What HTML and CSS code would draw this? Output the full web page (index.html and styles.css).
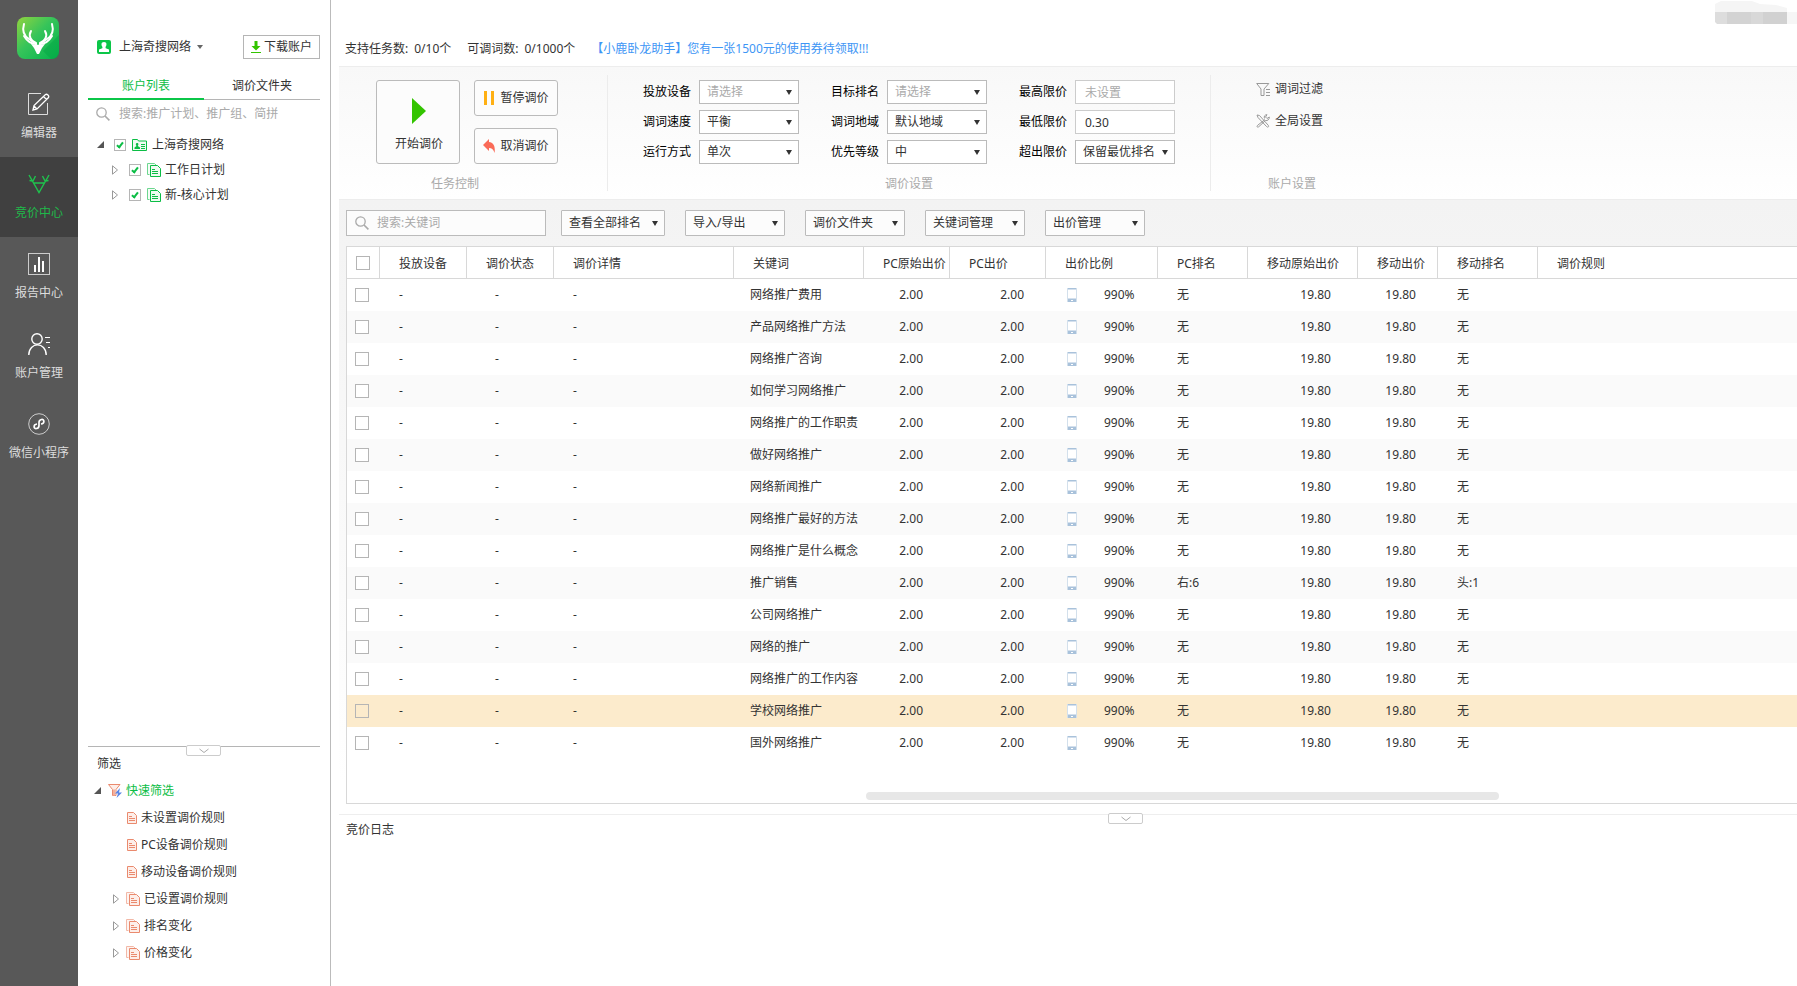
FILE: index.html
```html
<!DOCTYPE html>
<html lang="zh-CN">
<head>
    <meta charset="UTF-8">
    <meta name="viewport" content="width=device-width, initial-scale=1.0">
    <title>竞价中心</title>
    <link rel="stylesheet" href="styles.css">
</head>
<body>

<!-- shared icons -->
<svg class="defs" width="0" height="0">
    <symbol id="i-search" viewBox="0 0 14 14">
        <circle cx="5.5" cy="5.5" r="4.7" fill="none" stroke="#aaa" stroke-width="1.3"/>
        <path d="M9 9l4.4 4.4" stroke="#aaa" stroke-width="1.6"/>
    </symbol>
    <symbol id="i-closed" viewBox="0 0 7 10">
        <path d="M.5 .8v8.400l5-4.200z" fill="#fff" stroke="#999"/>
    </symbol>
    <symbol id="i-open" viewBox="0 0 7 7">
        <path d="M7 0v7H0z" fill="#555"/>
    </symbol>
    <symbol id="i-doc" viewBox="0 0 10 12">
        <path d="M.5 .5h6l3 3v8h-9z" fill="#fdeee9" stroke="#ea8a6e"/>
        <path d="M2 4.500h3M2 6.500h6M2 8.500h6" stroke="#ea8a6e"/>
    </symbol>
    <symbol id="i-docs" viewBox="0 0 14 14">
        <path d="M2.500 11.500h-2v-11h7l2 2" stroke="currentColor" opacity=".6"/>
        <path d="M3.500 2.500h7l3 3v8h-10z" stroke="currentColor"/>
        <path d="M5 6.500h3M5 8.500h6M5 10.500h6" stroke="currentColor"/>
    </symbol>
    <symbol id="i-phone" viewBox="0 0 10 14">
        <rect x=".5" y=".5" width="9" height="13" fill="#fff" stroke="#d3e0ec"/>
        <path d="M1 0h8v1.500H1zM1 10.500h8V14H1z" fill="#a9c2db"/>
        <path d="M4 12h2v1H4z" fill="#fff"/>
    </symbol>
    <symbol id="i-fold" viewBox="0 0 12 6">
        <path d="M1.500 1l4.500 3.500L10.500 1" fill="none" stroke="#aaa"/>
    </symbol>
</svg>

<nav class="nav">
    <svg class="logo" width="42" height="42" viewBox="0 0 42 42">
        <defs>
            <linearGradient id="lg" x1="0" y1="0" x2="1" y2="1">
                <stop offset="0" stop-color="#92d43f"/>
                <stop offset=".45" stop-color="#36c45a"/>
                <stop offset="1" stop-color="#02b44c"/>
            </linearGradient>
        </defs>
        <rect width="42" height="42" rx="8" fill="url(#lg)"/>
        <path d="M42 18L26 34l8 8h2a6 6 0 0 0 6-6z" fill="#05a544" opacity=".5"/>
        <g fill="none" stroke="#fff" stroke-width="2" stroke-linecap="round">
            <path d="M7 7c-2 7 0 12 5 15 3 2 5 4 7 5"/>
            <path d="M35 7c2 7 0 12-5 15-3 2-5 4-7 5"/>
            <path d="M14 14c-3 5 0 10 5 12"/>
            <path d="M28 14c3 5 0 10-5 12"/>
            <path d="M7 19c3 5 6 8 12 8M35 19c-3 5-6 8-12 8"/>
        </g>
        <path d="M14 27c5 1 9 1 14 0l-3 4-3 6h-2l-3-6z" fill="#fff"/>
    </svg>
    <a href="#" class="nav_item">
        <svg width="22" height="22" viewBox="0 0 22 22" fill="none" stroke="#ddd">
            <path d="M13 .5H.5v21h19V10"/>
            <path d="M5 17l1-4.500L17.500 1.500c1.500-1 4 1.500 3 3L9 16zM6 13l3 3M15.500 3.500l3 3" stroke="#fff" stroke-width="1.300"/>
        </svg>
        编辑器
    </a>
    <a href="#" class="nav_item active">
        <svg width="22" height="22" viewBox="0 0 22 22" fill="none" stroke="#1fc24d" stroke-width="1.400">
            <path d="M1 2l10 17.500L21 2M5.500 10h11M1.500 7.500l3 .5M7.500 3L5 8M20.500 7.500l-3 .5M14.500 3L17 8"/>
        </svg>
        竞价中心
    </a>
    <a href="#" class="nav_item">
        <svg width="22" height="22" viewBox="0 0 22 22">
            <rect x=".5" y=".5" width="21" height="21" fill="none" stroke="#ccc"/>
            <path d="M7 12v7M11 4v15M15 8v11" stroke="#fff" stroke-width="2"/>
        </svg>
        报告中心
    </a>
    <a href="#" class="nav_item">
        <svg width="22" height="22" viewBox="0 0 22 22" fill="none" stroke="#fff" stroke-width="1.400">
            <circle cx="9" cy="6" r="5.200"/>
            <path d="M.8 22c0-13.500 17.400-13.500 17.400 0"/>
            <path d="M17 4.500h5M18 9.500h4M20 14.500h2" stroke-width="1"/>
        </svg>
        账户管理
    </a>
    <a href="#" class="nav_item">
        <svg width="22" height="22" viewBox="0 0 22 22" fill="none">
            <circle cx="11" cy="11" r="10.300" stroke="#ccc"/>
            <path d="M9 11c-4 .5-3.500 5-.5 4.500 2-.3 2.500-1.500 2.500-3V9.500c0-1.500.5-2.700 2.500-3 3-.5 3.500 4-.5 4.500" stroke="#fff" stroke-width="1.700"/>
        </svg>
        微信小程序
    </a>
</nav>

<aside class="side">
    <div class="account">
        <svg width="14" height="14" viewBox="0 0 14 14">
            <rect width="14" height="14" rx="2" fill="#0bc648"/>
            <path d="M7 2c3 0 3 3 1.500 5l.2 1.200L12 9.500V12H2V9.500l3.300-1.300.2-1.200C4 5 4 2 7 2z" fill="#fff"/>
        </svg>
        <button class="account_name">上海奇搜网络</button>
        <button class="download">
            <svg width="10" height="12" viewBox="0 0 10 12" fill="#33c400"><path d="M3.500 0h3v5H9.500L5 9.500.5 5h3zM0 11h10v1H0z"/></svg>
            下载账户
        </button>
    </div>
    <div class="tabs">
        <button class="tab on">账户列表</button>
        <button class="tab">调价文件夹</button>
    </div>
    <div class="side_search">
        <svg width="14" height="14"><use href="#i-search"/></svg>
        <input type="text" aria-label="搜索账户" placeholder="搜索:推广计划、推广组、简拼">
    </div>
    <div class="tree">
        <div class="tree_row">
            <svg width="7" height="7"><use href="#i-open"/></svg>
            <input type="checkbox" id="t1" checked>
            <svg width="15" height="12" viewBox="0 0 15 12">
                <path d="M.5 11.500V.5h5l1 1.500h8v9.500z" fill="#effbf2" stroke="#0bbd45"/>
                <path d="M5 4c2 0 1.500 2 .8 3L8 8.500V10H2.500V8.500L4.500 7C3.500 6 3.500 4 5 4z" fill="#0bbd45"/>
                <path d="M9 5.500h4M9 7.500h4M9 9.500h4" stroke="#0bbd45"/>
            </svg>
            <label for="t1">上海奇搜网络</label>
        </div>
        <div class="tree_row child">
            <svg width="7" height="10"><use href="#i-closed"/></svg>
            <input type="checkbox" id="t2" checked>
            <svg class="docs green" width="14" height="14"><use href="#i-docs"/></svg>
            <label for="t2">工作日计划</label>
        </div>
        <div class="tree_row child">
            <svg width="7" height="10"><use href="#i-closed"/></svg>
            <input type="checkbox" id="t3" checked>
            <svg class="docs green" width="14" height="14"><use href="#i-docs"/></svg>
            <label for="t3">新-核心计划</label>
        </div>
    </div>
    <div class="filter">
        <button class="fold" aria-label="收起"><svg width="12" height="6"><use href="#i-fold"/></svg></button>
        <div class="filter_title">筛选</div>
        <div class="filter_row root">
            <svg width="7" height="7"><use href="#i-open"/></svg>
            <svg width="14" height="14" viewBox="0 0 14 14">
                <path d="M.5 .5h11.500L8 5.500v6H4.500v-6z" fill="#fdeee9" stroke="#ea8a6e"/>
                <path d="M5 5.500h2v6H5z" fill="#f4b09c"/>
                <path d="M12 4L7 9.500h3L8.500 14 14 8.500h-3z" fill="#5b86e5"/>
            </svg>
            <a href="#">快速筛选</a>
        </div>
        <div class="filter_row leaf"><svg width="10" height="12"><use href="#i-doc"/></svg><a href="#">未设置调价规则</a></div>
        <div class="filter_row leaf"><svg width="10" height="12"><use href="#i-doc"/></svg><a href="#">PC设备调价规则</a></div>
        <div class="filter_row leaf"><svg width="10" height="12"><use href="#i-doc"/></svg><a href="#">移动设备调价规则</a></div>
        <div class="filter_row branch"><svg width="7" height="10"><use href="#i-closed"/></svg><svg class="docs red" width="14" height="14"><use href="#i-docs"/></svg><a href="#">已设置调价规则</a></div>
        <div class="filter_row branch"><svg width="7" height="10"><use href="#i-closed"/></svg><svg class="docs red" width="14" height="14"><use href="#i-docs"/></svg><a href="#">排名变化</a></div>
        <div class="filter_row branch"><svg width="7" height="10"><use href="#i-closed"/></svg><svg class="docs red" width="14" height="14"><use href="#i-docs"/></svg><a href="#">价格变化</a></div>
    </div>
</aside>

<main class="main">
    <header class="top">
        <span class="count">支持任务数:</span><span>0/10个</span>
        <span class="count">可调词数:</span><span>0/1000个</span>
        <a href="#">【小鹿卧龙助手】您有一张1500元的使用券待领取!!!</a>
        <svg class="masked" width="85" height="24" viewBox="0 0 85 24">
            <path d="M3 12V4l6-3h31l8 3 16 1 11 3v4z" fill="#f5f5f5"/>
            <path d="M3 12h12v12H5l-2-2z" fill="#ddd"/>
            <path d="M15 12h36v12H15z" fill="#d3d3d3"/>
            <path d="M39 12h12v12H39z" fill="#d8d8d8"/>
            <path d="M51 12h24v12H51z" fill="#d1d1d1"/>
            <path d="M75 12h10v12H75z" fill="#f6f6f6"/>
        </svg>
    </header>

    <section class="ribbon">
        <div class="group task">
            <div class="task_btns">
                <button class="start">
                    <svg width="14" height="26" viewBox="0 0 14 26"><path d="M0 0l14 13L0 26z" fill="#33c400"/></svg>
                    开始调价
                </button>
                <div class="task_col">
                    <button>
                        <svg width="12" height="14" viewBox="0 0 12 14" fill="#ffb014"><path d="M1 0h3v14H1zM8 0h3v14H8z"/></svg>
                        暂停调价
                    </button>
                    <button>
                        <svg width="12" height="14" viewBox="0 0 12 14"><path d="M0 6l6-6v3c5 .5 6.500 5 5.500 11C10.500 10.500 9 9 6 9v3z" fill="#fa6b58"/></svg>
                        取消调价
                    </button>
                </div>
            </div>
            <div class="caption">任务控制</div>
        </div>
        <div class="group setting">
            <div class="fields">
                <div class="field"><label for="f1">投放设备</label><select id="f1" class="empty"><option>请选择</option></select></div>
                <div class="field"><label for="f2">目标排名</label><select id="f2" class="empty"><option>请选择</option></select></div>
                <div class="field"><label for="f3">最高限价</label><input id="f3" type="text" placeholder="未设置"></div>
                <div class="field"><label for="f4">调词速度</label><select id="f4"><option>平衡</option></select></div>
                <div class="field"><label for="f5">调词地域</label><select id="f5"><option>默认地域</option></select></div>
                <div class="field"><label for="f6">最低限价</label><input id="f6" type="text" value="0.30"></div>
                <div class="field"><label for="f7">运行方式</label><select id="f7"><option>单次</option></select></div>
                <div class="field"><label for="f8">优先等级</label><select id="f8"><option>中</option></select></div>
                <div class="field"><label for="f9">超出限价</label><select id="f9"><option>保留最优排名</option></select></div>
            </div>
            <div class="caption">调价设置</div>
        </div>
        <div class="group global">
            <div class="links">
                <a href="#">
                    <svg width="14" height="13" viewBox="0 0 14 13" fill="none" stroke="#999"><path d="M.7 .5h12.100L8 6v6.500H5V6zM10 6.500h4M10 9.500h4M10 12.500h4"/></svg>
                    调词过滤
                </a>
                <a href="#">
                    <svg width="14" height="14" viewBox="0 0 14 14" fill="none" stroke="#999">
                        <path d="M1 1l2.500.5 8.500 9.500c1.500 1.500 0 3-1.500 1.500L2 3.500z"/>
                        <path d="M9 5.500L2 11c-2 1.500-.5 3 1 1.500l6.500-6c2 .5 4-1 3.800-3.500L11 4.500 9.500 3 11 .7C9 .5 7.500 2.500 8.500 4.500"/>
                    </svg>
                    全局设置
                </a>
            </div>
            <div class="caption">账户设置</div>
        </div>
    </section>

    <section class="list">
        <div class="toolbar">
            <div class="kw_search">
                <svg width="14" height="14"><use href="#i-search"/></svg>
                <input type="text" aria-label="搜索关键词" placeholder="搜索:关键词">
            </div>
            <select class="rank" aria-label="排名"><option>查看全部排名</option></select>
            <button class="menu">导入/导出</button>
            <button class="menu">调价文件夹</button>
            <button class="menu">关键词管理</button>
            <button class="menu">出价管理</button>
        </div>
        <div class="grid">
            <table>
                <colgroup>
                    <col class="w33"><col class="w87"><col class="w87"><col class="w180"><col class="w130">
                    <col class="w86"><col class="w96"><col class="w112"><col class="w90"><col class="w110">
                    <col class="w80"><col class="w100"><col>
                </colgroup>
                <thead>
                    <tr>
                        <th class="check"><input type="checkbox" aria-label="全选"></th>
                        <th>投放设备</th>
                        <th>调价状态</th>
                        <th>调价详情</th>
                        <th>关键词</th>
                        <th>PC原始出价</th>
                        <th>PC出价</th>
                        <th>出价比例</th>
                        <th>PC排名</th>
                        <th>移动原始出价</th>
                        <th>移动出价</th>
                        <th>移动排名</th>
                        <th>调价规则</th>
                    </tr>
                </thead>
                <tbody id="rows"></tbody>
            </table>
            <div class="scroll"><div class="thumb"></div></div>
        </div>
    </section>

    <section class="log">
        <button class="fold" aria-label="收起日志"><svg width="12" height="6"><use href="#i-fold"/></svg></button>
        竞价日志
    </section>
</main>

<script>
    let words = ["网络推广费用","产品网络推广方法","网络推广咨询","如何学习网络推广","网络推广的工作职责","做好网络推广","网络新闻推广","网络推广最好的方法","网络推广是什么概念","推广销售","公司网络推广","网络的推广","网络推广的工作内容","学校网络推广","国外网络推广"]
    let html = ""
    for (let i = 0; i < words.length; i++) {
        let pc = "无"
        let mobile = "无"
        if (words[i] === "推广销售") {
            pc = "右:6"
            mobile = "头:1"
        }
        html += '<tr' + (words[i] === "学校网络推广" ? ' class="hover"' : '') + '>'
            + '<td class="check"><input type="checkbox" aria-label="' + words[i] + '"></td>'
            + '<td>-</td><td class="state">-</td><td>-</td>'
            + '<td class="word">' + words[i] + '</td>'
            + '<td class="num wide">2.00</td><td class="num">2.00</td>'
            + '<td class="ratio"><svg width="10" height="14"><use href="#i-phone"/></svg><span>990%</span></td>'
            + '<td>' + pc + '</td>'
            + '<td class="num wide">19.80</td><td class="num">19.80</td>'
            + '<td>' + mobile + '</td><td></td></tr>'
    }
    document.getElementById("rows").innerHTML = html
</script>

</body>
</html>
```
FILE: styles.css
```css
*{
    box-sizing: border-box;
}
body{
    margin: 0;
    min-height: 100vh;
    display: flex;
    background: #fff;
    color: #333;
    font: 12px/20px "Noto Sans", "Noto Sans CJK SC", sans-serif;
}
a{
    color: inherit;
    text-decoration: none;
}
button, input, select{
    margin: 0;
    font: inherit;
    color: inherit;
}
button{
    padding: 0;
    border: 0;
    background: none;
    cursor: pointer;
}
svg{
    flex: none;
    display: block;
}
.defs{
    position: absolute;
}
input::placeholder{
    color: #aaa;
    opacity: 1;
}

/* left nav */
.nav{
    flex: none;
    width: 78px;
    background: #585858;
}
.logo{
    margin: 17px 0 18px 17px;
}
.nav_item{
    display: flex;
    flex-direction: column;
    align-items: center;
    gap: 8px;
    height: 80px;
    padding-top: 16px;
    color: #ddd;
}
.nav_item.active{
    background: #404040;
    color: #1fb94a;
}

/* account panel */
.side{
    flex: none;
    width: 253px;
    display: flex;
    flex-direction: column;
    padding: 35px 10px 0;
    border-right: 1px solid #bbb;
}
.account{
    display: flex;
    align-items: center;
    padding-left: 9px;
}
.account_name{
    margin-left: 8px;
}
.account_name::after{
    content: "";
    display: inline-block;
    margin-left: 6px;
    vertical-align: 2px;
    border: 3px solid transparent;
    border-top: 4px solid #666;
    border-bottom: 0;
}
.download{
    display: flex;
    align-items: center;
    justify-content: center;
    gap: 3px;
    width: 77px;
    height: 24px;
    margin-left: auto;
    border: 1px solid #b5b5b5;
}
.tabs{
    display: flex;
    height: 24px;
    margin-top: 17px;
    border-bottom: 1px solid #b5b5b5;
}
.tab{
    flex: 1;
    height: 24px;
    padding-bottom: 4px;
}
.tab.on{
    padding-bottom: 2px;
    border-bottom: 2px solid #0bc648;
    color: #0bbd45;
}
.side_search{
    display: flex;
    align-items: center;
    gap: 9px;
    height: 28px;
    padding-left: 8px;
}
.side_search input, .kw_search input{
    flex: 1;
    min-width: 0;
    padding: 0;
    border: 0;
    outline: 0;
    background: none;
}
.tree{
    flex: 1;
    padding: 4px 0 0 9px;
}
.tree_row{
    display: flex;
    align-items: center;
    height: 25px;
}
.tree_row input{
    margin: 0 6px 0 10px;
}
.tree_row label{
    margin-left: 5px;
}
.tree_row.child{
    padding-left: 15px;
}
.tree_row.child label{
    margin-left: 4px;
}
input[type="checkbox"]{
    appearance: none;
    width: 12px;
    height: 12px;
    border: 1px solid #b5b5b5;
    background: #fff;
}
input[type="checkbox"]:checked::before{
    content: "";
    display: block;
    width: 2px;
    height: 5px;
    margin: 1px 0 0 3px;
    border: solid #0bbd45;
    border-width: 0 2px 2px 0;
    transform: rotate(38deg);
}
.docs.green{
    color: #0bbd45;
    fill: #effbf2;
}
.docs.red{
    color: #ea8a6e;
    fill: #fdeee9;
}

/* quick filter */
.fold{
    position: absolute;
    top: -2px;
    left: 50%;
    display: flex;
    align-items: center;
    justify-content: center;
    width: 35px;
    height: 11px;
    margin-left: -18px;
    border: 1px solid #ccc;
    border-radius: 2px;
    background: #fff;
}
.filter{
    position: relative;
    padding-bottom: 20px;
    border-top: 1px solid #b5b5b5;
}
.filter_title{
    padding: 7px 0 3px 9px;
}
.filter_row{
    display: flex;
    align-items: center;
    gap: 4px;
    height: 27px;
}
.filter_row.root{
    padding-left: 6px;
    color: #0bbd45;
}
.filter_row.root svg + svg{
    margin-left: 3px;
}
.filter_row.leaf{
    padding-left: 39px;
}
.filter_row.branch{
    padding-left: 25px;
}
.filter_row.branch svg + svg{
    margin-left: 2px;
}

/* main */
.main{
    flex: 1;
    min-width: 0;
}
.top{
    position: relative;
    display: flex;
    height: 66px;
    padding: 39px 0 0 14px;
}
.top span{
    margin-right: 16px;
}
.top .count{
    margin-right: 6px;
}
.top a{
    color: #3d95f5;
}
.masked{
    position: absolute;
    top: 0;
    right: 0;
}
.ribbon{
    display: flex;
    margin-left: 8px;
    height: 133px;
    padding-top: 8px;
    border-top: 1px solid #ededed;
    background: linear-gradient(#f8f8f8, #fff);
}
.group{
    height: 116px;
    padding-top: 5px;
    border-right: 1px solid #ececec;
}
.caption{
    margin-top: 10px;
    color: #aaa;
    text-align: center;
}
.task{
    width: 269px;
    padding-right: 36px;
}
.task_btns{
    display: flex;
    gap: 14px;
    height: 84px;
    margin-left: 37px;
}
.task_btns button{
    display: flex;
    align-items: center;
    justify-content: center;
    gap: 5px;
    width: 84px;
    height: 36px;
    border: 1px solid #bbb;
    border-radius: 3px;
    background: #fcfcfc;
}
.task_btns .start{
    flex-direction: column;
    gap: 10px;
    height: 84px;
    padding: 7px 0 0 2px;
}
.task_col{
    display: flex;
    flex-direction: column;
    justify-content: space-between;
}
.setting{
    width: 603px;
}
.fields{
    display: grid;
    grid-template-columns: repeat(3, 156px);
    gap: 6px 32px;
    margin-left: 35px;
}
.field{
    display: flex;
    align-items: center;
    justify-content: space-between;
    color: #000;
}
.field select, .field input{
    width: 100px;
    height: 24px;
    color: #333;
}
.field input{
    padding: 0 9px;
    border: 1px solid #ccc;
    background: #fff;
}
select, .menu{
    appearance: none;
    padding: 0 18px 0 7px;
    border: 1px solid #bbb;
    border-radius: 0;
    background: #fff url("data:image/svg+xml,%3Csvg xmlns='http://www.w3.org/2000/svg' width='6' height='5'%3E%3Cpath d='M0 0h6L3 5z' fill='%23333'/%3E%3C/svg%3E") no-repeat right 6px center;
    text-align: left;
}
.field select.empty{
    color: #aaa;
}
.global{
    width: 162px;
    border: 0;
}
.links{
    display: flex;
    flex-direction: column;
    gap: 12px;
    height: 84px;
    margin: -1px 0 11px 45px;
}
.links a{
    display: flex;
    align-items: center;
    gap: 5px;
}

/* keyword list */
.list{
    margin-left: 8px;
    padding: 10px 0 10px 7px;
    border-top: 1px solid #ededed;
    background: linear-gradient(#f3f3f3, #fff 95%);
}
.toolbar{
    display: flex;
    gap: 20px;
}
.kw_search{
    display: flex;
    align-items: center;
    gap: 8px;
    width: 200px;
    height: 26px;
    margin-right: -5px;
    padding-left: 8px;
    border: 1px solid #bbb;
    background: #fcfcfc;
}
.toolbar select, .menu{
    width: 100px;
    height: 26px;
    border-radius: 1px;
    background-color: #fcfcfc;
}
.toolbar .rank{
    width: 104px;
}
.grid{
    margin-top: 10px;
    border: 1px solid #d8d8d8;
    border-right: 0;
    background: #fff;
}
table{
    width: 100%;
    table-layout: fixed;
    border-collapse: separate;
    border-spacing: 0;
}
.w33{ width: 33px; }
.w80{ width: 80px; }
.w86{ width: 86px; }
.w87{ width: 87px; }
.w90{ width: 90px; }
.w96{ width: 96px; }
.w100{ width: 100px; }
.w110{ width: 110px; }
.w112{ width: 112px; }
.w130{ width: 130px; }
.w180{ width: 180px; }
th, td{
    height: 32px;
    padding: 0 0 0 19px;
    font-weight: normal;
    text-align: left;
    white-space: nowrap;
}
th{
    padding-top: 2px;
    border-right: 1px solid #d8d8d8;
    border-bottom: 1px solid #d8d8d8;
}
th:last-child{
    border-right: 0;
}
td.check{
    padding-left: 8px;
}
th.check{
    padding: 0 0 0 9px;
}
.check input{
    display: block;
    width: 14px;
    height: 14px;
}
td.state{
    padding-left: 28px;
}
td.word{
    padding-left: 16px;
}
td.num{
    padding: 0 22px 0 0;
    text-align: right;
}
td.num.wide{
    padding-right: 27px;
}
.ratio svg, .ratio span{
    display: inline-block;
    vertical-align: middle;
}
.ratio svg{
    margin: 0 27px 0 2px;
}
tbody tr:nth-child(even){
    background: #fafafa;
}
tbody tr.hover{
    background: #fcebcc;
}
tr.hover input{
    background: none;
}
.scroll{
    padding: 33px 0 3px 519px;
}
.thumb{
    width: 68%;
    height: 8px;
    border-radius: 4px;
    background: #e7e7e7;
}

.log{
    position: relative;
    margin-left: 8px;
    padding: 5px 0 0 7px;
    border-top: 1px solid #eee;
}
.log .fold{
    left: 54%;
}
```
